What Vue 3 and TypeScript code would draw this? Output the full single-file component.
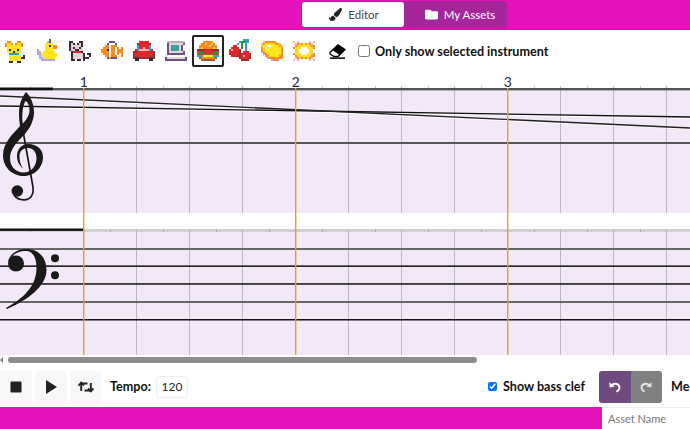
<template>
  <div class="page">
    <header class="top-bar">
      <nav class="tabs">
        <button class="tab active">
          <svg class="tab-icon" viewBox="0 0 512 512"><path d="M167.02 309.34c-40.12 2.58-76.53 17.86-97.19 72.3-2.35 6.21-8 9.98-14.59 9.98-11.11 0-45.46-27.67-55.25-34.35C0 439.62 37.93 512 128 512c75.86 0 128-43.77 128-120.19 0-3.11-.65-6.08-.97-9.13l-88.01-73.34zM457.89 0c-15.16 0-29.37 6.71-40.21 16.45C213.27 199.05 192 203.34 192 257.09c0 13.7 3.25 26.76 8.73 38.7l63.82 53.18c7.21 1.8 14.64 3.03 22.39 3.03 62.11 0 98.11-45.47 211.16-256.46 7.38-14.35 13.9-29.85 13.9-45.99C512 20.64 486 0 457.89 0z" /></svg>
          Editor
        </button>
        <button class="tab assets">
          <svg class="tab-icon" viewBox="0 0 512 512"><path d="M464 128H272l-64-64H48C21.49 64 0 85.49 0 112v288c0 26.51 21.49 48 48 48h416c26.51 0 48-21.49 48-48V176c0-26.51-21.49-48-48-48z" /></svg>
          My Assets
        </button>
      </nav>
    </header>

    <section class="toolbar">
      <div
        v-for="(s, i) in sprites"
        :key="s.name"
        class="instrument"
        :class="{ selected: i === selectedIndex }"
        :title="s.name"
      >
        <svg width="22" height="24" viewBox="0 0 11 12">
          <template v-for="(row, y) in s.rows" :key="y">
            <template v-for="(c, x) in row" :key="x">
              <rect v-if="c !== '.'" :x="x" :y="y" width="1" height="1" :fill="palette[c]" />
            </template>
          </template>
        </svg>
      </div>
      <div class="instrument eraser">
        <svg width="17" height="15" viewBox="0 0 17 15">
          <path d="M1 8.5 9 .8 16 5.5 9 12.5H5L1 10z" fill="#fff" stroke="#000" stroke-width="1.3" />
          <path d="M9 .8 16 5.5 10.5 11 3.5 6.2z" fill="#000" />
          <rect x="1" y="13.4" width="15" height="1.5" fill="#000" />
        </svg>
      </div>
      <label class="check-label only-selected">
        <input type="checkbox" />
        Only show selected instrument
      </label>
    </section>

    <svg class="score" width="690" height="283" viewBox="0 72 690 283">
      <rect x="0" y="90" width="690" height="123" fill="#f3e8f7" />
      <rect x="0" y="232" width="690" height="123" fill="#f3e8f7" />

      <rect x="0" y="229" width="690" height="3" fill="#d2cdd2" />
      <line v-for="x in ticks" :key="'t' + x" :x1="x" :x2="x" y1="86" y2="88" stroke="#c4c4c4" />
      <line v-for="x in ticks" :key="'b' + x" :x1="x" :x2="x" y1="229" y2="232" stroke="#b0acb0" />

      <template v-for="x in beats" :key="x">
        <line :x1="x" :x2="x" y1="86" y2="213" stroke="#bdb7c2" />
        <line :x1="x" :x2="x" y1="229" y2="355" stroke="#bdb7c2" />
      </template>

      <rect x="0" y="88" width="690" height="2.4" fill="#555" />
      <rect x="0" y="142" width="690" height="2" fill="#555" />
      <line x1="0" y1="107.2" x2="690" y2="118.2" stroke="#fff" stroke-width="1" />
      <line x1="0" y1="97.2" x2="690" y2="129.2" stroke="#fff" stroke-width="1" />
      <line x1="0" y1="106" x2="690" y2="117" stroke="#111" stroke-width="1.4" />
      <line x1="0" y1="96" x2="690" y2="128" stroke="#222" stroke-width="1.4" />

      <rect x="0" y="248" width="690" height="2" fill="#666" />
      <rect x="0" y="265.4" width="690" height="1.5" fill="#111" />
      <rect x="0" y="283.2" width="690" height="1.5" fill="#111" />
      <rect x="0" y="301" width="690" height="2" fill="#666" />
      <rect x="0" y="319" width="690" height="1.5" fill="#111" />

      <rect x="0" y="87.5" width="53" height="2.6" fill="#111" />
      <rect x="0" y="228.5" width="83" height="2.4" fill="#111" />

      <template v-for="(x, i) in measures" :key="x">
        <rect :x="x" y="88" width="1.4" height="267" fill="#ec9f1e" />
        <text :x="x + 0.7" y="87" text-anchor="middle" class="measure-num">{{ i + 1 }}</text>
      </template>

      <!-- treble clef -->
      <g fill="#1a1a1a">
        <path
          fill-rule="evenodd"
          d="M26 92C22 97 19 104 19 113C19 118 19.5 122 20 126C14 133 3 142 3 155C3 168 13 176 24 176C35 176 43 167 43 157C43 149 36 144 28.5 144C21 144 17 150 17 156C17 162 20 166 23 168.5C20 164 19.5 160 19.5 156C19.5 151 23 148 28 148C33 148 36.5 152 36.5 158C36.5 166 31 172.5 24 172.5C15 172.5 10 166 10 158C10 149 18 141 24.5 134.500C30 128 34 121 34 112C34 104 30.5 96 26 92ZM25.500 101C22.500 106 22 113 22.500 124C26 120 29.500 116 29.500 110C29.500 106 28 102 25.500 101Z"
        />
        <path d="M20.700 118 32.800 186C34.500 195 30 199.800 24 199.800C20 199.800 16 198 14 195" fill="none" stroke="#1a1a1a" stroke-width="1.7" />
        <circle cx="17.300" cy="191" r="5.800" />
      </g>

      <!-- bass clef -->
      <g fill="#1a1a1a">
        <path d="M8 262C10 253 18 249 26.500 249C38 249 46.500 257 46.500 270C46.500 286 28 300 6.800 309L6 308C22 299 36.500 287 36.500 268C36.500 258 33 251 26 251C20 251 15 253 12.500 256.500Z" />
        <circle cx="16" cy="263.500" r="8" />
        <circle cx="55" cy="258.300" r="4" />
        <circle cx="55" cy="275.300" r="4" />
      </g>
    </svg>

    <div class="scrollbar">
      <span class="scroll-arrow"></span>
      <div class="scroll-thumb"></div>
    </div>

    <section class="controls">
      <div class="transport">
        <button class="ctl-btn">
          <svg width="12" height="12" viewBox="0 0 12 12"><rect width="11" height="11" x="0.5" y="0.5" rx="1" fill="#222" /></svg>
        </button>
        <button class="ctl-btn">
          <svg width="12" height="14" viewBox="0 0 12 14"><path d="M1 0 12 7 1 14z" fill="#222" /></svg>
        </button>
        <button class="ctl-btn">
          <svg width="16" height="12" viewBox="0 0 16 12" fill="none" stroke="#222" stroke-width="1.9">
            <path d="M3.200 10V2.500H9.500M12.800 2V9.500H6.500" />
            <path d="M.5 4.500 3.200 1.600 6 4.500M10 7.500 12.800 10.400 15.500 7.500" />
          </svg>
        </button>
      </div>
      <label class="tempo">
        Tempo:
        <input class="tempo-input" type="text" :value="tempo" />
      </label>
      <label class="check-label bass-toggle">
        <input v-model="showBass" type="checkbox" />
        Show bass clef
      </label>
      <div class="history">
        <button class="hist-btn undo">
          <svg width="14" height="14" viewBox="0 0 14 14" fill="none" stroke="#fff" stroke-width="2">
            <path d="M3 6C4.500 3.600 8 3 10 4.600C12.400 6.600 11.800 10.400 8.400 11.600" />
            <path d="M1.200 2.200 1.800 7.400 6.800 6.600z" fill="#fff" stroke="none" />
          </svg>
        </button>
        <button class="hist-btn redo">
          <svg width="14" height="14" viewBox="0 0 14 14" fill="none" stroke="#e4e4e4" stroke-width="2">
            <path d="M11 6C9.500 3.600 6 3 4 4.600C1.600 6.600 2.200 10.400 5.600 11.600" />
            <path d="M12.800 2.200 12.200 7.400 7.200 6.600z" fill="#e4e4e4" stroke="none" />
          </svg>
        </button>
      </div>
      <span class="measures-label">Measures:</span>
    </section>

    <footer class="bottom-bar">
      <input class="asset-name" type="text" placeholder="Asset Name" />
    </footer>
  </div>
</template>

<script setup lang="ts">
import { ref } from 'vue'

interface Sprite {
  name: string
  rows: string[]
}

const palette: Record<string, string> = {
  k: '#3b2a3f',
  y: '#ffe61c',
  o: '#ff8a1c',
  r: '#e3262b',
  d: '#a52a2a',
  w: '#ffffff',
  p: '#b9a3dc',
  v: '#6a4f8c',
  b: '#2a9fd8',
  g: '#e2d4d0',
  s: '#b9b0b8',
  t: '#2fa7a3',
  n: '#9c5a32',
  c: '#f6c96a',
  e: '#2b8f4e',
  m: '#ffb4a8',
}

const sprites: Sprite[] = [
  {
    name: 'mouse',
    rows: [
      '...........',
      '.oo...oo...',
      'oyyo.oyyo..',
      'oyyyyyyyo..',
      '.yyyyyyy...',
      '.ykyyyky...',
      '.yyykyyy...',
      '..bbtbb....',
      '..yyyyyy.k.',
      '..yyyyyykk.',
      '..yyyyyy...',
      '..kk..kk...',
    ],
  },
  {
    name: 'duck',
    rows: [
      '......v....',
      '.....pv....',
      '....yyyy...',
      '....yykyoo.',
      '....yyyyoo.',
      'p...yyyy...',
      'pp.yyyyyy..',
      'ppyyyyyyyy.',
      '.pgyyyyyyy.',
      '.ppgyyyyy..',
      '..ppppppp..',
      '...........',
    ],
  },
  {
    name: 'cat',
    rows: [
      '...........',
      'kk...kk....',
      'kgk.kgk....',
      'kgggggk....',
      'kgkggkg....',
      'kggkkgg....',
      '.krrrrk....',
      '.kgggggk.kk',
      '.kgggggk..k',
      '.kgggggkkk.',
      '.kk.kk.k...',
      '...........',
    ],
  },
  {
    name: 'fish',
    rows: [
      '...........',
      '....vvv....',
      '...v...v...',
      '..oowooo...',
      '.ooowoowo.o',
      'oookwoowooo',
      'oooowoowooo',
      '.ooowoowo.o',
      '..oowooo..o',
      '...vovvv...',
      '...........',
      '...........',
    ],
  },
  {
    name: 'car',
    rows: [
      '...........',
      '...rrrrr...',
      '..drrrrrd..',
      '..brrrrrb..',
      '..brrmrrb..',
      '.dbmmmmmbd.',
      'ddrrrrrrrrd',
      'drrrrrrrrrd',
      'dnrrrrrrrnd',
      'dkkdddddkkd',
      '.kk.....kk.',
      '...........',
    ],
  },
  {
    name: 'computer',
    rows: [
      '...........',
      '.sssssssss.',
      '.vgggggggv.',
      '.vgttttgv..',
      '.vgttttgv..',
      '.vgttttgv..',
      '.vgggggggv.',
      '.vvvvvvvvv.',
      '...........',
      'vgggggggggv',
      'vvvvvvvvvvv',
      '...........',
    ],
  },
  {
    name: 'burger',
    rows: [
      '...........',
      '...ooooo...',
      '..oocooco..',
      '.ooooocooo.',
      '.ocoooooco.',
      'ddddrrrdddd',
      'neerrrrreen',
      'nnnnnnnnnnn',
      'bbbyyyyybbb',
      '.nooooooon.',
      '..nnnnnnn..',
      '...........',
    ],
  },
  {
    name: 'cherry',
    rows: [
      '.......ttt.',
      '.....teebt.',
      '....b.e.b..',
      '..rr..e.b..',
      '.rrrr.e.b..',
      'rmrrrr..b..',
      'rrrrrd.rrr.',
      'rrrrrdrrrrr',
      '.rrrddrmrrd',
      '.....drrrrd',
      '......dddd.',
      '...........',
    ],
  },
  {
    name: 'lemon',
    rows: [
      '...........',
      '.coooooc...',
      'coyyyyyooc.',
      'cyywwyyyyoc',
      'oywyyyyyyyo',
      'oyyyyyyyyyo',
      'poyyyyyyyyo',
      '.poyyyyyyyo',
      '..ooyyyyyoo',
      '...pooooooo',
      '.....poop..',
      '...........',
    ],
  },
  {
    name: 'explosion',
    rows: [
      '...........',
      'm.m.....m.m',
      '.mocoyocom.',
      '.ocyyyyycoo',
      'oyyywwwyyco',
      '.cywwwwwyy.',
      '.cywwwwwyc.',
      'oyyywwwyyco',
      '.ocyyyyycoo',
      '.mocoyocom.',
      'm.m.....m.m',
      '...........',
    ],
  },
]

const selectedIndex = 6
const tempo = ref(120)
const showBass = ref(true)

const measures = [83, 295, 507]
const beats = [136.5, 189.5, 242.5, 348.5, 401.5, 454.5, 560.5, 613.5, 666.5]
const ticks = [30.5, 110.5, 163.5, 216.5, 269.5, 322.5, 375.5, 428.5, 481.5, 534.5, 587.5, 640.5]
</script>

<style scoped>
.page {
  width: 690px;
  height: 429px;
  overflow: hidden;
  background: #fff;
  font-family: Lato, 'Open Sans', sans-serif;
  color: #111;
}

.top-bar {
  height: 30px;
  box-sizing: border-box;
  background: #e312b9;
  border-bottom: 1px solid #d80fae;
  padding: 1px 0 0 301px;
}

.tabs {
  display: flex;
  width: 206px;
  height: 27px;
  background: #a5259b;
  border-radius: 3px;
  box-sizing: border-box;
  padding: 1px;
}

.tab {
  display: flex;
  align-items: center;
  justify-content: center;
  gap: 6px;
  border: none;
  background: none;
  color: #fff;
  font: 11.5px Lato, 'Open Sans', sans-serif;
  padding: 0;
  border-radius: 3px;
}

.tab.active {
  width: 102px;
  flex: none;
  padding-left: 2px;
  box-sizing: border-box;
  background: #fff;
  color: #444;
}

.tab.assets {
  flex: 1;
  padding-left: 10px;
}

.tab-icon {
  width: 13px;
  height: 13px;
  fill: currentColor;
}

.tab.active .tab-icon {
  fill: #222;
}

.toolbar {
  height: 42px;
  display: flex;
  align-items: flex-start;
  padding-top: 5px;
  box-sizing: border-box;
}

.instrument {
  width: 32px;
  height: 32px;
  flex: none;
  display: flex;
  align-items: center;
  justify-content: center;
  box-sizing: border-box;
}

.instrument.selected {
  border: 2px solid #222;
  border-radius: 2px;
  background: #fff;
}

.eraser {
  margin-left: 1px;
}

.check-label {
  display: flex;
  align-items: center;
  font-weight: 700;
  font-size: 12.6px;
  white-space: nowrap;
}

.check-label input {
  margin: 0;
}

.only-selected {
  height: 32px;
  margin-left: 5px;
  gap: 5px;
}

.only-selected input {
  width: 12px;
  height: 12px;
}

.score {
  display: block;
}

.measure-num {
  font-family: Lato, 'Open Sans', sans-serif;
  font-size: 14px;
  fill: #1c2a44;
}

.scrollbar {
  height: 10px;
  display: flex;
  align-items: center;
  background: #fff;
}

.scroll-arrow {
  width: 0;
  height: 0;
  border-style: solid;
  border-width: 3px 3px 3px 0;
  border-color: transparent #777 transparent transparent;
  margin-right: 5px;
}

.scroll-thumb {
  width: 469px;
  height: 6px;
  border-radius: 3px;
  background: #8c8c8c;
}

.controls {
  height: 42px;
  display: flex;
  align-items: center;
  padding-top: 1px;
  box-sizing: border-box;
}

.transport {
  display: flex;
  gap: 3px;
}

.ctl-btn {
  width: 32px;
  height: 32px;
  display: flex;
  align-items: center;
  justify-content: center;
  border: none;
  border-radius: 3px;
  background: #f7f7f7;
  padding: 0;
}

.tempo {
  display: flex;
  align-items: center;
  gap: 5px;
  margin-left: 8px;
  font-size: 12.6px;
  font-weight: 700;
}

.tempo-input {
  width: 32px;
  height: 22px;
  box-sizing: border-box;
  border: 1px solid #eee;
  border-radius: 3px;
  font: 12px Lato, 'Open Sans', sans-serif;
  text-align: center;
  padding: 0;
  color: #222;
}

.bass-toggle {
  margin-left: auto;
  gap: 6px;
}

.bass-toggle input {
  width: 9px;
  height: 9px;
}

.history {
  display: flex;
  margin-left: 14px;
  border-radius: 3px;
  overflow: hidden;
  flex: none;
}

.hist-btn {
  width: 31.5px;
  height: 32px;
  display: flex;
  align-items: center;
  justify-content: center;
  border: none;
  padding: 0;
}

.hist-btn.undo {
  background: #6f4a7e;
}

.hist-btn.redo {
  background: #808080;
}

.measures-label {
  flex: none;
  width: 61px;
  margin-left: 9px;
  margin-right: -42px;
  font-size: 12.6px;
  font-weight: 700;
  white-space: nowrap;
}

.bottom-bar {
  height: 22px;
  background: #e312b9;
  display: flex;
  justify-content: flex-end;
}

.asset-name {
  width: 88px;
  height: 22px;
  box-sizing: border-box;
  border: none;
  border-top: 1px solid #eee;
  padding: 0 6px;
  font: 11px Lato, 'Open Sans', sans-serif;
  outline: none;
}

.asset-name::placeholder {
  color: #777;
}
</style>
